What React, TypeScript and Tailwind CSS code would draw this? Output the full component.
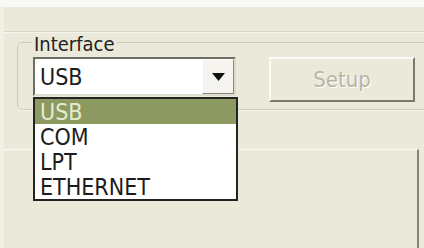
import React from 'react';

const items = ['USB', 'COM', 'LPT', 'ETHERNET'];

function ComboBox() {
  return (
    <div className="relative flex h-[39px] w-[203px] border-2 border-t-[#6e6d64] border-l-[#6e6d64] border-r-[#dedcce] border-b-[#dedcce] bg-white">
      <div className="flex flex-1 items-center pl-[5px] text-[23px] leading-[24px] text-[#1c1c1c]">USB</div>
      {/* drop button */}
      <div className="flex w-[32px] items-center justify-center border border-t-white border-l-white border-r-[#8a897d] border-b-[#8a897d] bg-[#f5f4ee]">
        <svg width="13" height="8" viewBox="0 0 13 8">
          <path d="M0 0 H13 L6.5 8 Z" fill="#111" />
        </svg>
      </div>
    </div>
  );
}

export default function App() {
  return (
    <div className="relative flex h-[248px] w-[424px] flex-col overflow-hidden bg-[#ebe9da] font-['DejaVu_Sans_Condensed','DejaVu_Sans',sans-serif] font-stretch-condensed">
      <div className="h-[7px] shrink-0 bg-[#f8f8f4]" />
      <div className="flex flex-1">
        <div className="w-[4px] shrink-0 bg-[#f1f0e6]" />
        <div className="flex flex-1 flex-col">
          <div className="h-[25px] shrink-0 border-b border-[#d8d6c6]" />
          <div className="h-px shrink-0 bg-[#f6f5ed]" />

          {/* Interface group */}
          <div className="relative mt-[9px] ml-[13px] mr-[-20px] h-[68px] shrink-0 rounded-[5px] border border-[#cbc9b9] shadow-[0_1px_0_#f8f7f0]">
            <span className="absolute top-[-9px] left-[14px] bg-[#ebe9da] px-[2px] text-[20px] leading-[20px] text-[#222]">
              Interface
            </span>
            <div className="flex items-start gap-[33px] pt-[14px] pl-[15px]">
              <ComboBox />
              <div className="flex h-[45px] w-[146px] items-center justify-center border-2 border-t-[#fbfaf4] border-l-[#fbfaf4] border-r-[#7b7a6d] border-b-[#7b7a6d] bg-[#ebe9da]">
                <span className="text-[22px] leading-[24px] text-[#b8b6a8] [text-shadow:1px_1px_0_#ffffff]">Setup</span>
              </div>
            </div>
          </div>

          {/* lower panel */}
          <div className="mt-[39px] w-[415px] flex-1 border-t border-r-2 border-t-[#fafaf4] border-r-[#858478]" />
        </div>
      </div>

      {/* open dropdown list */}
      <div className="absolute top-[97px] left-[33px] w-[205px] border-2 border-[#242424] bg-white">
        {items.map((item, i) => (
          <div
            key={item}
            className={
              i === 0
                ? 'flex h-[25px] items-center bg-[#8c9a62] pl-[5px] text-[23px] leading-[24px] text-[#e4ecd0]'
                : 'flex h-[25px] items-center pl-[5px] text-[23px] leading-[24px] text-[#1c1c1c]'
            }
          >
            {item}
          </div>
        ))}
      </div>
    </div>
  );
}
